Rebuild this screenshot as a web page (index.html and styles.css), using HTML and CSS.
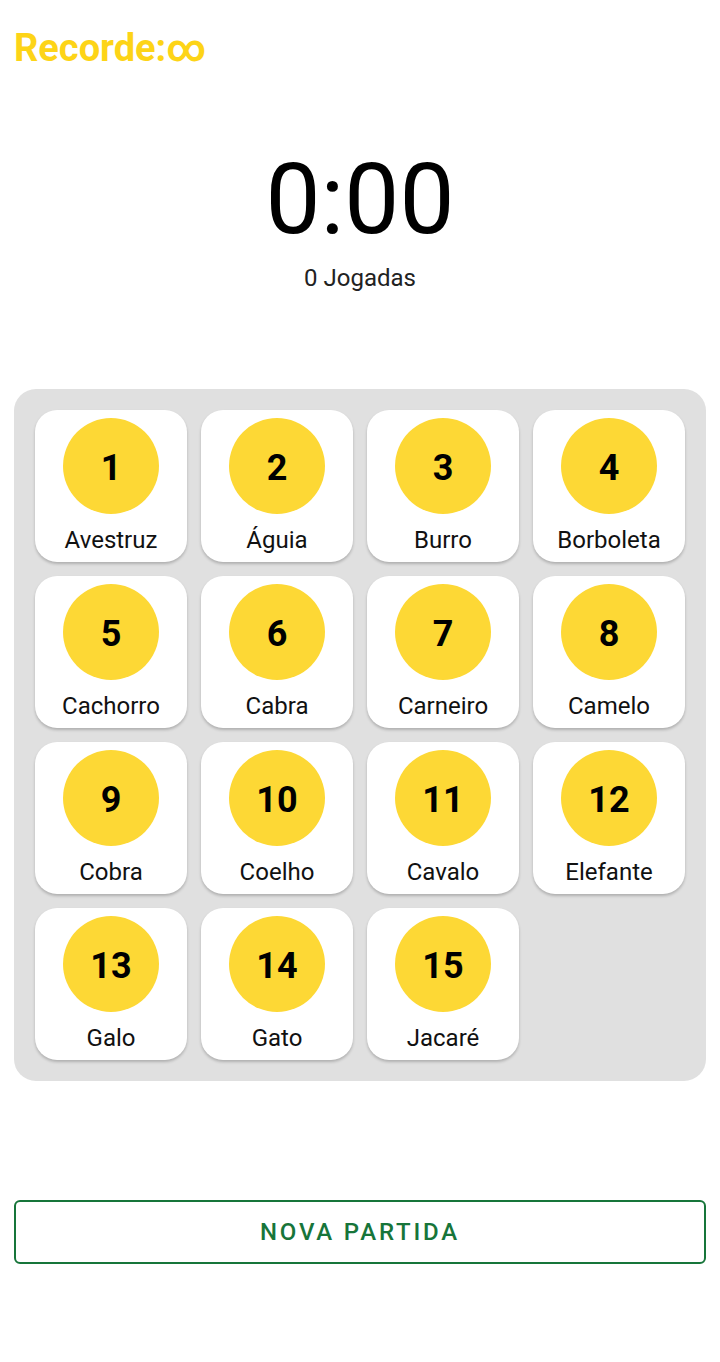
FILE: index.html
```html
<!DOCTYPE html>
<html lang="pt">
<head>
    <meta charset="UTF-8">
    <meta name="viewport" content="width=device-width, initial-scale=1.0">
    <title>Jogo da Memória</title>
    <link rel="stylesheet" href="styles.css">
</head>
<body>
    <div class="app">
        <div class="record">Recorde:∞</div>

        <div class="clock">
            <div class="time">0:00</div>
            <div class="moves">0 Jogadas</div>
        </div>

        <div class="board">
            <div class="tile"><div class="ball">1</div><div class="name">Avestruz</div></div>
            <div class="tile"><div class="ball">2</div><div class="name">Águia</div></div>
            <div class="tile"><div class="ball">3</div><div class="name">Burro</div></div>
            <div class="tile"><div class="ball">4</div><div class="name">Borboleta</div></div>
            <div class="tile"><div class="ball">5</div><div class="name">Cachorro</div></div>
            <div class="tile"><div class="ball">6</div><div class="name">Cabra</div></div>
            <div class="tile"><div class="ball">7</div><div class="name">Carneiro</div></div>
            <div class="tile"><div class="ball">8</div><div class="name">Camelo</div></div>
            <div class="tile"><div class="ball">9</div><div class="name">Cobra</div></div>
            <div class="tile"><div class="ball">10</div><div class="name">Coelho</div></div>
            <div class="tile"><div class="ball">11</div><div class="name">Cavalo</div></div>
            <div class="tile"><div class="ball">12</div><div class="name">Elefante</div></div>
            <div class="tile"><div class="ball">13</div><div class="name">Galo</div></div>
            <div class="tile"><div class="ball">14</div><div class="name">Gato</div></div>
            <div class="tile"><div class="ball">15</div><div class="name">Jacaré</div></div>
        </div>

        <button class="new-game">NOVA PARTIDA</button>
    </div>
</body>
</html>
```

FILE: styles.css
```css
* {
    margin: 0;
    padding: 0;
    box-sizing: border-box;
}

body {
    background: #fff;
    font-family: Roboto, "Noto Sans", sans-serif;
    color: #111;
}

.app {
    display: flex;
    flex-direction: column;
    padding: 0 14px;
}

.record {
    margin-top: 24px;
    font-size: 38px;
    font-weight: 700;
    line-height: 48px;
    color: #fdd417;
}

.clock {
    margin-top: 78px;
    display: flex;
    flex-direction: column;
    align-items: center;
}

.time {
    font-size: 98px;
    line-height: 100px;
    color: #000;
}

.moves {
    margin-top: 13px;
    font-size: 24px;
    line-height: 30px;
    color: #222;
}

.board {
    margin-top: 96px;
    background: #e0e0e0;
    border-radius: 22px;
    padding: 21px;
    display: grid;
    grid-template-columns: repeat(4, 152px);
    grid-auto-rows: 152px;
    gap: 14px;
}

.tile {
    background: #fff;
    border-radius: 22px;
    box-shadow: 0 2px 3px rgba(0,0,0,0.22);
    display: flex;
    flex-direction: column;
    align-items: center;
    padding-top: 8px;
}

.ball {
    width: 96px;
    height: 96px;
    border-radius: 50%;
    background: #fdd835;
    display: flex;
    align-items: center;
    justify-content: center;
    padding-top: 3px;
    font-size: 36px;
    font-weight: 700;
    color: #000;
}

.name {
    margin-top: 11px;
    font-size: 24px;
    line-height: 30px;
    color: #111;
}

.new-game {
    margin-top: 119px;
    height: 64px;
    background: #fff;
    border: 2px solid #17753a;
    border-radius: 6px;
    font-family: Roboto, "Noto Sans", sans-serif;
    font-size: 24px;
    font-weight: 500;
    letter-spacing: 2.8px;
    color: #17753a;
}
```
